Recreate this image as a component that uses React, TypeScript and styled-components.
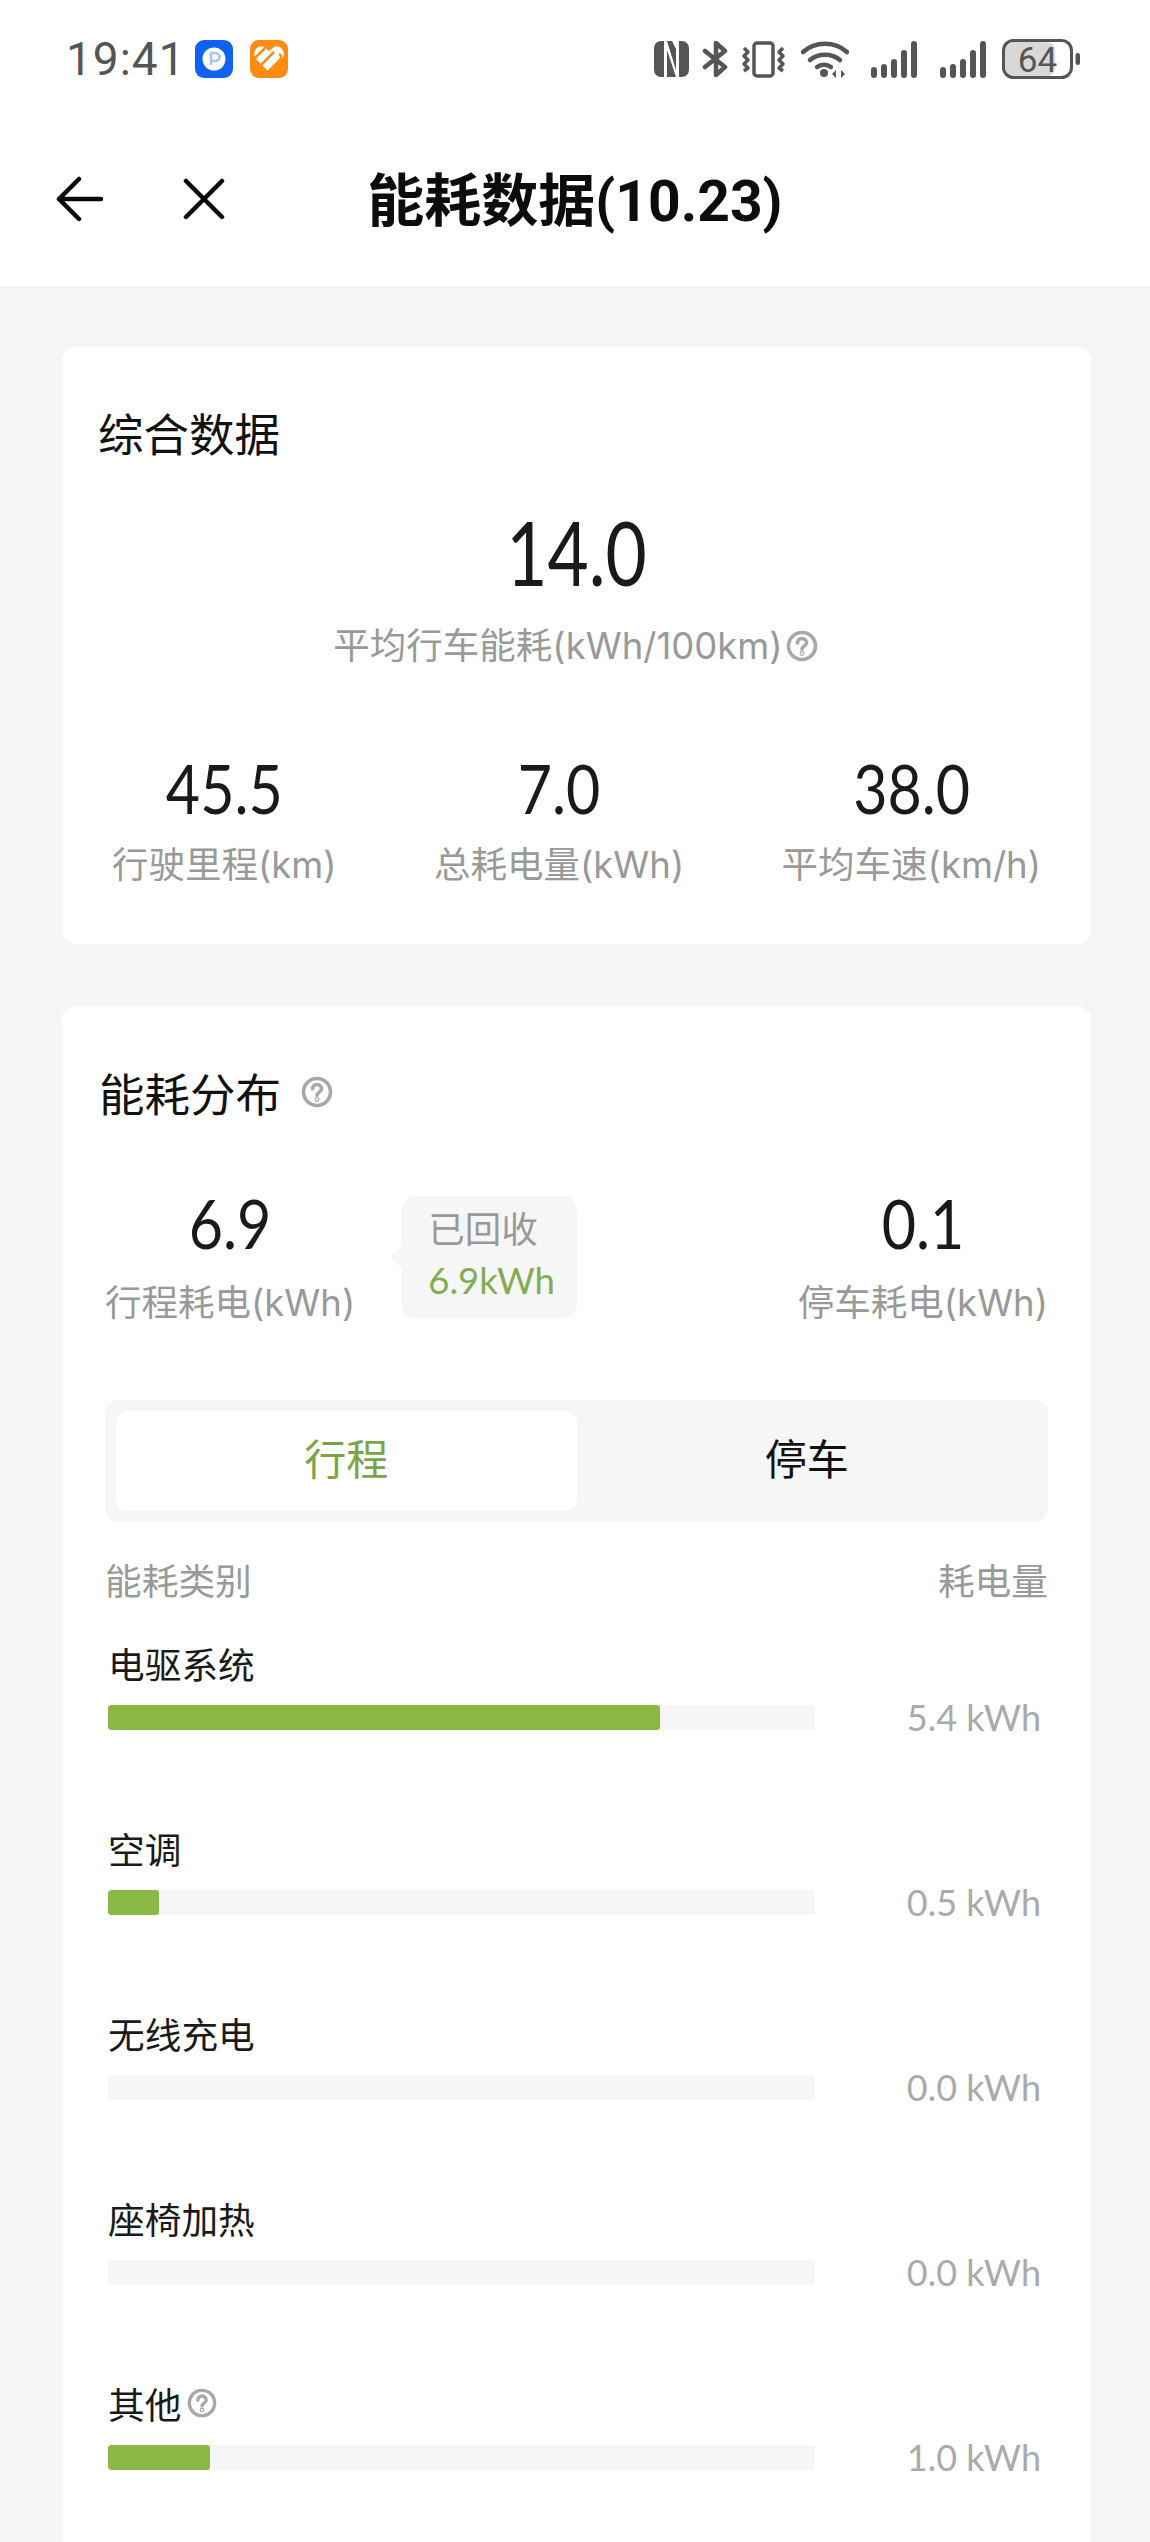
import React from "react";
import styled, { createGlobalStyle } from "styled-components";

const CJK = '"Noto Sans CJK SC", sans-serif';
const LATIN = 'Lato, "Noto Sans CJK SC", sans-serif';
const LABEL = 'Inter, "Noto Sans CJK SC", sans-serif';

const GlobalStyle = createGlobalStyle`
    html, body {
        margin: 0;
        padding: 0;
        background: #f5f5f5;
    }
    * {
        box-sizing: border-box;
    }
`;

const Page = styled.div`
    width: 1150px;
    height: 2542px;
    overflow: hidden;
    background: #f5f5f5;
    font-family: ${LATIN};
    color: #1a1a1a;
`;

const Header = styled.header`
    background: #fff;
    height: 286px;
`;

const StatusBar = styled.div`
    height: 116px;
    display: flex;
    align-items: center;
    padding: 2px 0 0 66px;
`;

const Time = styled.span`
    font-family: Roboto, sans-serif;
    font-size: 46px;
    letter-spacing: 1px;
    color: #555;
    width: 129px;
`;

const AppIcon = styled.div<{ $bg: string }>`
    width: 38px;
    height: 38px;
    border-radius: 9px;
    background: ${(p) => p.$bg};
    margin-right: 17px;
    display: flex;
    align-items: center;
    justify-content: center;
`;

const StatusRight = styled.div`
    margin-left: auto;
    display: flex;
    align-items: center;
    padding-right: 70px;
`;

const StatusIcon = styled.span<{ $gap?: number }>`
    display: flex;
    margin-left: ${(p) => p.$gap ?? 13}px;
`;

const Nav = styled.nav`
    height: 170px;
    padding: 0 55px 10px;
    display: grid;
    grid-template-columns: 1fr auto 1fr;
    align-items: center;
`;

const NavIcons = styled.div`
    display: flex;
    align-items: center;
    gap: 78px;
    margin-top: 5px;
`;

const Title = styled.h1`
    margin: 0;
    font-family: ${`Roboto, ${CJK}`};
    font-size: 57px;
    font-weight: 700;
    color: #0c0c0c;
    white-space: nowrap;
`;

const Content = styled.main`
    padding: 61px 59px 0 62px;
    display: flex;
    flex-direction: column;
    gap: 62px;
`;

const Card = styled.section`
    background: #fff;
    border-radius: 14px;
`;

const OverviewCard = styled(Card)`
    height: 597px;
    padding-top: 55px;
`;

const CardTitle = styled.h2<{ $inset: number }>`
    margin: 0;
    padding-left: ${(p) => p.$inset}px;
    height: 60px;
    line-height: 60px;
    font-family: ${CJK};
    font-size: 45.5px;
    font-weight: 400;
    color: #111;
    display: flex;
    align-items: center;
    gap: 20px;
`;

const Headline = styled.div`
    margin-top: 41px;
    text-align: center;
`;

const BigNumber = styled.div`
    font-size: 90px;
    line-height: 96px;
    color: #1a1a1a;
    transform: scaleX(0.79);
`;

const SubLabel = styled.div`
    margin-top: 22px;
    padding-right: 2px;
    font-family: ${LABEL};
    font-size: 36.5px;
    line-height: 50px;
    color: #999;
    display: flex;
    align-items: center;
    justify-content: center;
    gap: 3px;
`;

const StatRow = styled.div`
    margin-top: 77px;
    padding: 0 50px;
    display: flex;
    justify-content: space-between;
`;

const Stat = styled.div`
    text-align: center;
`;

const StatValue = styled.div`
    font-size: 68px;
    line-height: 80px;
    color: #1a1a1a;
    transform: scaleX(0.87);
`;

const StatLabel = styled.div`
    margin-top: 12px;
    font-family: ${LABEL};
    font-size: 36.5px;
    line-height: 50px;
    color: #999;
    white-space: nowrap;
`;

const BreakdownCard = styled(Card)`
    height: 1600px;
    padding-top: 56px;
`;

const SplitRow = styled.div`
    margin-top: 61px;
    padding: 0 43px;
    display: flex;
    align-items: flex-start;
    height: 175px;
`;

const SplitStat = styled(Stat)<{ $right?: boolean }>`
    margin-left: ${(p) => (p.$right ? "auto" : "0")};
`;

const SplitLabel = styled(StatLabel)`
    margin-top: 15px;
`;

const Recovered = styled.div`
    position: relative;
    margin: 13px 0 0 47px;
    width: 175px;
    height: 122px;
    padding: 8px 0 0 26px;
    border-radius: 14px;
    background: #f6f6f6;
    font-size: 36.5px;
    line-height: 51px;
    color: #999;

    &::before {
        content: "";
        position: absolute;
        left: -8px;
        top: 52px;
        width: 17px;
        height: 17px;
        background: #f6f6f6;
        transform: rotate(45deg);
    }
`;

const RecoveredValue = styled.div`
    color: #83ad53;
`;

const Segmented = styled.div`
    margin: 42px 43px 0;
    height: 122px;
    padding: 11px;
    border-radius: 14px;
    background: #f6f6f6;
    display: grid;
    grid-template-columns: 1fr 1fr;
`;

const Segment = styled.div<{ $active?: boolean }>`
    border-radius: 12px;
    background: ${(p) => (p.$active ? "#fff" : "transparent")};
    color: ${(p) => (p.$active ? "#7ba544" : "#111")};
    font-family: ${CJK};
    font-size: 42px;
    padding-bottom: 10px;
    display: flex;
    align-items: center;
    justify-content: center;
`;

const TableHead = styled.div`
    margin-top: 32px;
    padding: 0 43px;
    height: 50px;
    display: flex;
    justify-content: space-between;
    align-items: center;
    font-family: ${CJK};
    font-size: 36.7px;
    color: #999;
`;

const Rows = styled.div`
    margin-top: 33px;
    padding: 0 50px 0 46px;
    display: flex;
    flex-direction: column;
`;

const Row = styled.div`
    height: 185px;
    display: grid;
    grid-template-columns: 707px 1fr;
    grid-template-rows: 52px 25px;
    row-gap: 16px;
`;

const RowLabel = styled.div`
    grid-column: 1;
    font-family: ${CJK};
    font-size: 36.7px;
    line-height: 52px;
    color: #1a1a1a;
    display: flex;
    align-items: center;
    gap: 6px;
`;

const Track = styled.div`
    grid-column: 1;
    grid-row: 2;
    height: 25px;
    border-radius: 3px;
    background: #f6f6f6;
    overflow: hidden;
`;

const Fill = styled.div`
    height: 100%;
    border-radius: 3px;
    background: #8ab845;
`;

const RowValue = styled.div`
    grid-column: 2;
    grid-row: 2;
    align-self: center;
    text-align: right;
    font-size: 36px;
    line-height: 25px;
    color: #aaa;
    white-space: nowrap;
`;

const Help: React.FC<{ size: number; color?: string }> = ({ size, color = "#a8a8a8" }) => (
    <svg width={size} height={size} viewBox="0 0 32 32" fill="none" stroke={color} strokeWidth="3.6" strokeLinecap="round">
        <circle cx="16" cy="16" r="13.5" />
        <path d="M11.5 13a4.5 4.5 0 0 1 9 0c0 3-4.5 3.2-4.5 6.2" />
        <circle cx="16" cy="23.5" r="0.6" />
    </svg>
);

const Nfc = () => (
    <svg width="35" height="36" viewBox="0 0 35 36" fill="#555">
        <path fillRule="evenodd" d="M7 0h3v36H7a7 7 0 0 1-7-7V7a7 7 0 0 1 7-7zM13 0h5l4 8v21zM13 9l9 27h-9zM25 0h3a7 7 0 0 1 7 7v22a7 7 0 0 1-7 7h-3z" />
    </svg>
);

const Bluetooth = () => (
    <svg width="26" height="36" viewBox="0 0 26 36" fill="none" stroke="#555" strokeWidth="4.5" strokeLinecap="round" strokeLinejoin="round">
        <path d="M3 10l20 16-9 8V2l9 8L3 26" />
    </svg>
);

const Vibrate = () => (
    <svg width="45" height="37" viewBox="0 0 45 37" fill="none" stroke="#555" strokeWidth="3.5" strokeLinejoin="round">
        <rect x="13" y="2" width="19" height="33" rx="3" />
        <path d="M3 7l4 4-4 4 4 4-4 4 4 4-4 3" />
        <path d="M42 7l-4 4 4 4-4 4 4 4-4 4 4 3" />
    </svg>
);

const Wifi = () => (
    <svg width="48" height="37" viewBox="0 0 48 37" fill="none" stroke="#555" strokeWidth="4.5" strokeLinecap="round">
        <path d="M2 11c12-11 32-11 44 0" />
        <path d="M9 19c8-7 22-7 30 0" />
        <path d="M16 26c4-3 10-3 14 0" />
        <circle cx="23" cy="32" r="4" fill="#555" stroke="none" />
        <path d="M35 29l-4 4 4 4zM40 29l4 4-4 4z" fill="#555" stroke="none" />
    </svg>
);

const Signal = () => (
    <svg width="46" height="37" viewBox="0 0 46 37" fill="#555">
        <rect x="0" y="26" width="6" height="11" rx="3" />
        <rect x="10" y="23" width="6" height="14" rx="3" />
        <rect x="20" y="18" width="6" height="19" rx="3" />
        <rect x="30" y="9" width="6" height="28" rx="3" />
        <rect x="40" y="0" width="6" height="37" rx="3" />
    </svg>
);

const Battery = () => (
    <svg width="78" height="40" viewBox="0 0 78 40" fill="none">
        <rect x="3" y="3" width="50" height="34" rx="8" fill="#d8d8d8" />
        <rect x="1.5" y="1.5" width="68" height="37" rx="10" stroke="#555" strokeWidth="3" />
        <rect x="73.5" y="14" width="4.5" height="12" rx="2.2" fill="#555" />
        <text x="35.5" y="32.5" textAnchor="middle" fontFamily="Roboto, sans-serif" fontSize="35" fill="#555">64</text>
    </svg>
);

const BackIcon = () => (
    <svg width="50" height="46" viewBox="0 0 50 46" fill="none" stroke="#0a0a0a" strokeWidth="4.5" strokeLinecap="round" strokeLinejoin="round">
        <path d="M46 23H4M24 3L4 23l20 20" />
    </svg>
);

const CloseIcon = () => (
    <svg width="42" height="42" viewBox="0 0 42 42" fill="none" stroke="#0a0a0a" strokeWidth="4.5" strokeLinecap="round">
        <path d="M3 3l36 36M39 3L3 39" />
    </svg>
);

const rows = [
    { name: "电驱系统", value: "5.4 kWh", width: 552 },
    { name: "空调", value: "0.5 kWh", width: 51 },
    { name: "无线充电", value: "0.0 kWh", width: 0 },
    { name: "座椅加热", value: "0.0 kWh", width: 0 },
    { name: "其他", value: "1.0 kWh", width: 102, help: true },
];

const App: React.FC = () => {
    return (
        <Page>
            <GlobalStyle />
            <Header>
                <StatusBar>
                    <Time>19:41</Time>
                    <AppIcon $bg="#0f62f2">
                        <svg width="24" height="24" viewBox="0 0 24 24">
                            <circle cx="12" cy="12" r="11.5" fill="#fff" />
                            <path d="M9 18V6h4.5a4 4 0 0 1 0 8H9" fill="none" stroke="#a9c4f5" strokeWidth="2.6" />
                        </svg>
                    </AppIcon>
                    <AppIcon $bg="#ff8c10">
                        <svg width="32" height="30" viewBox="0 0 32 30">
                            <path d="M16 28L3 15C-2 8 5 0 11 3l5 4 5-4c6-3 13 5 8 12z" fill="#fff" />
                            <path d="M1 15L12 4M7 22L21 8M14 29L27 16C29 13 28 11 26 10" fill="none" stroke="#ff8c10" strokeWidth="2.5" />
                        </svg>
                    </AppIcon>
                    <StatusRight>
                        <StatusIcon $gap={0}><Nfc /></StatusIcon>
                        <StatusIcon><Bluetooth /></StatusIcon>
                        <StatusIcon><Vibrate /></StatusIcon>
                        <StatusIcon $gap={15}><Wifi /></StatusIcon>
                        <StatusIcon $gap={22}><Signal /></StatusIcon>
                        <StatusIcon $gap={23}><Signal /></StatusIcon>
                        <StatusIcon $gap={16}><Battery /></StatusIcon>
                    </StatusRight>
                </StatusBar>
                <Nav>
                    <NavIcons>
                        <BackIcon />
                        <CloseIcon />
                    </NavIcons>
                    <Title>能耗数据(10.23)</Title>
                </Nav>
            </Header>
            <Content>
                <OverviewCard>
                    <CardTitle $inset={36}>综合数据</CardTitle>
                    <Headline>
                        <BigNumber>14.0</BigNumber>
                        <SubLabel>
                            平均行车能耗(kWh/100km)
                            <Help size={32} />
                        </SubLabel>
                    </Headline>
                    <StatRow>
                        <Stat>
                            <StatValue>45.5</StatValue>
                            <StatLabel>行驶里程(km)</StatLabel>
                        </Stat>
                        <Stat>
                            <StatValue>7.0</StatValue>
                            <StatLabel>总耗电量(kWh)</StatLabel>
                        </Stat>
                        <Stat>
                            <StatValue>38.0</StatValue>
                            <StatLabel>平均车速(km/h)</StatLabel>
                        </Stat>
                    </StatRow>
                </OverviewCard>
                <BreakdownCard>
                    <CardTitle $inset={37}>
                        能耗分布
                        <Help size={32} />
                    </CardTitle>
                    <SplitRow>
                        <SplitStat>
                            <StatValue>6.9</StatValue>
                            <SplitLabel>行程耗电(kWh)</SplitLabel>
                        </SplitStat>
                        <Recovered>
                            已回收
                            <RecoveredValue>6.9kWh</RecoveredValue>
                        </Recovered>
                        <SplitStat $right>
                            <StatValue>0.1</StatValue>
                            <SplitLabel>停车耗电(kWh)</SplitLabel>
                        </SplitStat>
                    </SplitRow>
                    <Segmented>
                        <Segment $active>行程</Segment>
                        <Segment>停车</Segment>
                    </Segmented>
                    <TableHead>
                        <span>能耗类别</span>
                        <span>耗电量</span>
                    </TableHead>
                    <Rows>
                        {rows.map((row) => (
                            <Row key={row.name}>
                                <RowLabel>
                                    {row.name}
                                    {row.help && <Help size={30} />}
                                </RowLabel>
                                <Track>
                                    <Fill style={{ width: row.width }} />
                                </Track>
                                <RowValue>{row.value}</RowValue>
                            </Row>
                        ))}
                    </Rows>
                </BreakdownCard>
            </Content>
        </Page>
    );
};

export default App;
